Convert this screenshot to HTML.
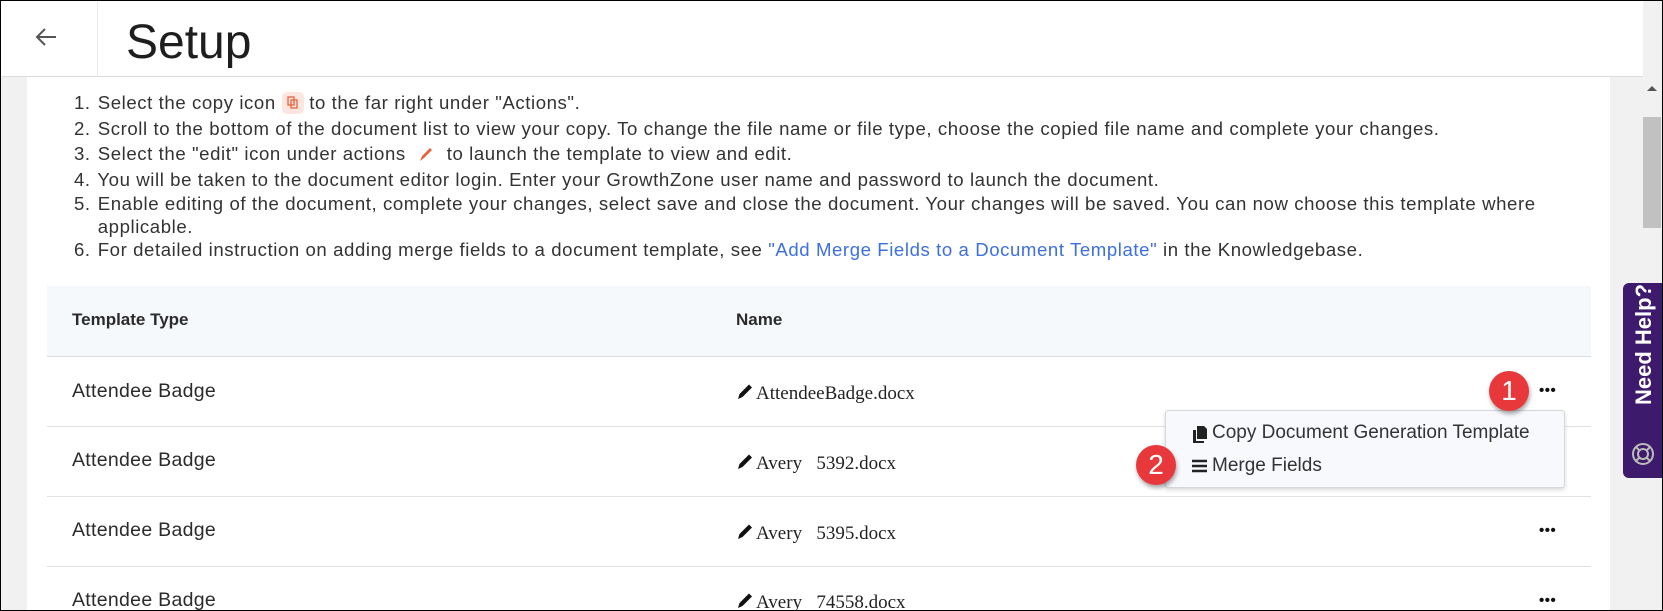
<!DOCTYPE html>
<html><head><meta charset="utf-8"><style>
*{margin:0;padding:0;box-sizing:border-box}
html,body{width:1663px;height:611px;overflow:hidden}
body{background:#f1f1f1;font-family:"Liberation Sans",sans-serif;color:#2b2b2b;position:relative}
.frame{position:absolute;left:0;top:0;width:1663px;height:611px;border:1px solid #000;pointer-events:none;z-index:50}
.hdr{position:absolute;left:0;top:0;width:1643px;height:77px;background:#fff;border-bottom:1px solid #dcdcdc;z-index:2}
.back{position:absolute;left:0;top:0;width:98px;height:76px;border-right:1px solid #ececec}
.title{position:absolute;left:126px;top:15px;font-size:48px;color:#1e1e1e}
.content{position:absolute;left:27px;top:77px;width:1583px;height:534px;background:#fff}
.li{position:absolute;left:47px;font-size:18.6px;letter-spacing:0.58px;white-space:nowrap;color:#333;line-height:22px}
.li span.n{display:inline-block;width:18px}
a{color:#3d6fe0;text-decoration:none}
.tbl{position:absolute;left:47px;top:286px;width:1544px;height:330px}
.th{position:absolute;top:0;left:0;width:100%;height:71px;background:#f6f9fc;border-bottom:1px solid #ddd}
.row{position:absolute;left:0;width:100%;height:70px;border-bottom:1px solid #e2e2e2;background:#fff}
.c1{position:absolute;left:25px;font-size:19.5px;letter-spacing:0.3px;color:#2b2b2b}
.c2{position:absolute;left:689px;font-family:"Liberation Serif",serif;font-size:19px;color:#222}
.c2 svg{vertical-align:-1px;margin-right:2px}
.dots{position:absolute;left:1492px;font-size:15px;letter-spacing:0.5px;font-weight:bold;color:#111}
.dd{position:absolute;left:1165px;top:410px;width:400px;height:78px;background:#f7f9fc;border:1px solid #d4d8dd;border-radius:3px;box-shadow:0 2px 4px rgba(0,0,0,.15);z-index:5}
.badge{position:absolute;width:40px;height:40px;border-radius:50%;background:#e8383b;color:#fff;font-size:28px;text-align:center;line-height:40px;box-shadow:1px 3px 4px rgba(0,0,0,.35);z-index:6}
.help{position:absolute;left:1623px;top:283px;width:40px;height:195px;background:#3d1a6b;border-radius:6px 0 0 6px;z-index:7}
</style></head><body>
<div class="hdr"><div class="back"><svg width="98" height="76"><path d="M56 37H38M45 29l-8 8 8 8" stroke="#555" stroke-width="2" fill="none"/></svg></div><div class="title">Setup</div></div>
<div style="position:absolute;left:1643px;top:0;width:20px;height:611px;background:#f1f1f1"></div>
<svg style="position:absolute;left:1645px;top:84px" width="14" height="8"><path d="M2 7L7 2 12 7z" fill="#555"/></svg>
<div style="position:absolute;left:1643px;top:117px;width:18px;height:111px;background:#c1c1c1"></div>
<div class="content">
<div class="li" style="top:15px"><span class="n">1.</span> Select the copy icon <span style="display:inline-block;width:22px;height:22px;background:#fde6e0;border-radius:5px;vertical-align:-5px;position:relative"><svg width="22" height="22" style="position:absolute;left:0;top:0"><rect x="6" y="5" width="6" height="8" fill="none" stroke="#e8613c" stroke-width="1.3"/><rect x="9" y="8" width="6" height="8" fill="none" stroke="#e8613c" stroke-width="1.3"/></svg></span> to the far right under "Actions".</div>
<div class="li" style="top:41px"><span class="n">2.</span> Scroll to the bottom of the document list to view your copy. To change the file name or file type, choose the copied file name and complete your changes.</div>
<div class="li" style="top:66px"><span class="n">3.</span> Select the "edit" icon under actions &nbsp;<svg width="18" height="18" style="vertical-align:-3px"><path d="M3 16l2-5 8-8 2 2-8 8z" fill="#e8613c"/></svg>&nbsp; to launch the template to view and edit.</div>
<div class="li" style="top:92px"><span class="n">4.</span> You will be taken to the document editor login. Enter your GrowthZone user name and password to launch the document.</div>
<div class="li" style="top:116px"><span class="n">5.</span> Enable editing of the document, complete your changes, select save and close the document. Your changes will be saved. You can now choose this template where</div>
<div class="li" style="top:139px"><span class="n"></span> applicable.</div>
<div class="li" style="top:162px"><span class="n">6.</span> For detailed instruction on adding merge fields to a document template, see <a>"Add Merge Fields to a Document Template"</a> in the Knowledgebase.</div>
</div>
<div class="tbl">
<div class="th"><div style="position:absolute;left:25px;top:24px;font-size:17px;font-weight:bold">Template Type</div><div style="position:absolute;left:689px;top:24px;font-size:17px;font-weight:bold">Name</div></div>
<div class="row" style="top:71px"><div class="c1" style="top:23px">Attendee Badge</div><div class="c2" style="top:25px"><svg width="18" height="18"><path d="M2 17l1.5-5L13 2.5l3 3L6.5 15z" fill="#111"/></svg>AttendeeBadge.docx</div><div class="dots" style="top:25px">•••</div></div>
<div class="row" style="top:141px"><div class="c1" style="top:22px">Attendee Badge</div><div class="c2" style="top:25px"><svg width="18" height="18"><path d="M2 17l1.5-5L13 2.5l3 3L6.5 15z" fill="#111"/></svg>Avery &nbsp;&nbsp;5392.docx</div></div>
<div class="row" style="top:211px"><div class="c1" style="top:22px">Attendee Badge</div><div class="c2" style="top:25px"><svg width="18" height="18"><path d="M2 17l1.5-5L13 2.5l3 3L6.5 15z" fill="#111"/></svg>Avery &nbsp;&nbsp;5395.docx</div><div class="dots" style="top:25px">•••</div></div>
<div class="row" style="top:281px;border:0"><div class="c1" style="top:22px">Attendee Badge</div><div class="c2" style="top:24px"><svg width="18" height="18"><path d="M2 17l1.5-5L13 2.5l3 3L6.5 15z" fill="#111"/></svg>Avery &nbsp;&nbsp;74558.docx</div><div class="dots" style="top:25px">•••</div></div>
</div>
<div class="dd">
<svg style="position:absolute;left:26px;top:14px" width="16" height="18"><path d="M5 1h7l3 3v10H5z" fill="#222"/><path d="M1 5h3v11h8v2H1z" fill="#222"/></svg>
<div style="position:absolute;left:46px;top:11px;font-size:19px;color:#333">Copy Document Generation Template</div>
<svg style="position:absolute;left:26px;top:48px" width="15" height="14"><path d="M0 2h15M0 7h15M0 12h15" stroke="#222" stroke-width="2.4"/></svg>
<div style="position:absolute;left:46px;top:44px;font-size:19px;color:#333">Merge Fields</div>
</div>
<div class="badge" style="left:1489px;top:371px">1</div>
<div class="badge" style="left:1136px;top:445px">2</div>
<div class="help">
<div style="position:absolute;left:8px;top:122px;transform:rotate(-90deg);transform-origin:0 0;color:#fff;font-weight:bold;font-size:22px;white-space:nowrap">Need Help?</div>
<svg style="position:absolute;left:8px;top:159px" width="24" height="24"><circle cx="12" cy="12" r="10" fill="none" stroke="#bbb" stroke-width="2"/><circle cx="12" cy="12" r="5" fill="none" stroke="#bbb" stroke-width="2"/><path d="M5 5l4 4M19 5l-4 4M5 19l4-4M19 19l-4-4" stroke="#bbb" stroke-width="2"/></svg>
</div>
<div class="frame"></div>
</body></html>
